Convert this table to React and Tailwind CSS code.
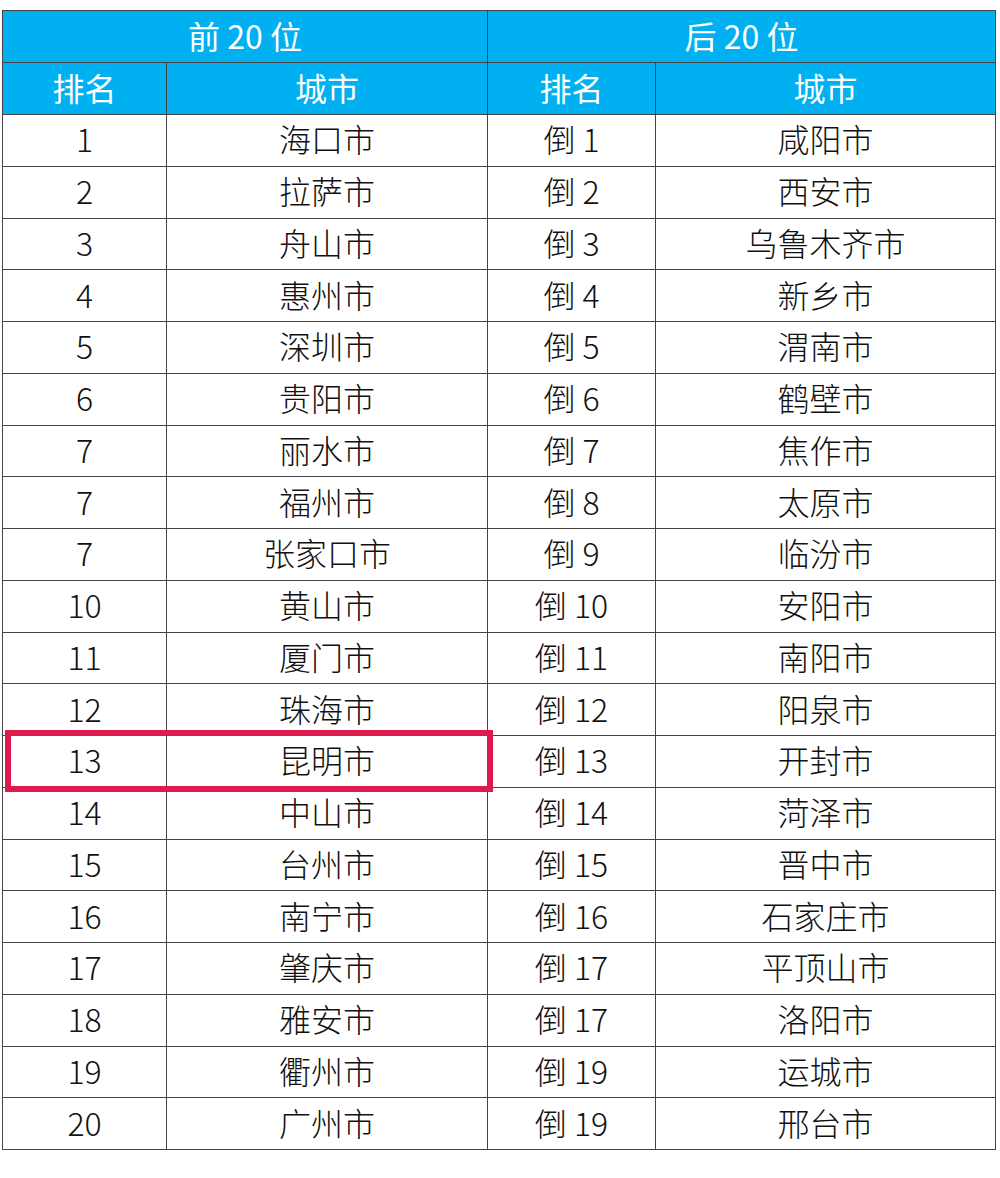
// App.jsx
const left = [
  ["1", "海口市"], ["2", "拉萨市"], ["3", "舟山市"], ["4", "惠州市"], ["5", "深圳市"],
  ["6", "贵阳市"], ["7", "丽水市"], ["7", "福州市"], ["7", "张家口市"], ["10", "黄山市"],
  ["11", "厦门市"], ["12", "珠海市"], ["13", "昆明市"], ["14", "中山市"], ["15", "台州市"],
  ["16", "南宁市"], ["17", "肇庆市"], ["18", "雅安市"], ["19", "衢州市"], ["20", "广州市"],
];

const right = [
  ["倒 1", "咸阳市"], ["倒 2", "西安市"], ["倒 3", "乌鲁木齐市"], ["倒 4", "新乡市"], ["倒 5", "渭南市"],
  ["倒 6", "鹤壁市"], ["倒 7", "焦作市"], ["倒 8", "太原市"], ["倒 9", "临汾市"], ["倒 10", "安阳市"],
  ["倒 11", "南阳市"], ["倒 12", "阳泉市"], ["倒 13", "开封市"], ["倒 14", "菏泽市"], ["倒 15", "晋中市"],
  ["倒 16", "石家庄市"], ["倒 17", "平顶山市"], ["倒 17", "洛阳市"], ["倒 19", "运城市"], ["倒 19", "邢台市"],
];

const cell = "border-[1.5px] border-[#444] text-center align-middle p-0 pb-[4px]";
const head = `${cell} bg-[#00b0f0] text-white h-[52px] font-normal`;

export default function App() {
  return (
    <div
      className="bg-white w-[1000px] min-h-[1178px] pt-[10px] pl-[2px]"
      style={{ fontFamily: '"Noto Sans CJK SC", "Noto Sans", sans-serif' }}
    >
      <div className="relative w-[993px]">
        <table className="w-[993px] border-collapse table-fixed text-[32px] font-light leading-none text-[#111]">
          <colgroup>
            <col className="w-[164px]" />
            <col className="w-[321px]" />
            <col className="w-[168px]" />
            <col className="w-[340px]" />
          </colgroup>
          <thead>
            <tr>
              <th colSpan={2} className={head}>前 20 位</th>
              <th colSpan={2} className={head}>后 20 位</th>
            </tr>
            <tr>
              <th className={head}>排名</th>
              <th className={head}>城市</th>
              <th className={head}>排名</th>
              <th className={head}>城市</th>
            </tr>
          </thead>
          <tbody>
            {left.map((l, i) => (
              <tr key={i}>
                <td className={`${cell} h-[51.75px]`}>{l[0]}</td>
                <td className={`${cell} h-[51.75px]`}>{l[1]}</td>
                <td className={`${cell} h-[51.75px]`}>{right[i][0]}</td>
                <td className={`${cell} h-[51.75px]`}>{right[i][1]}</td>
              </tr>
            ))}
          </tbody>
        </table>
        {/* highlight on 昆明 row */}
        <div className="absolute left-[3px] top-[720px] w-[488px] h-[62px] border-[6px] border-[#dc1a4b] pointer-events-none" />
      </div>
    </div>
  );
}
